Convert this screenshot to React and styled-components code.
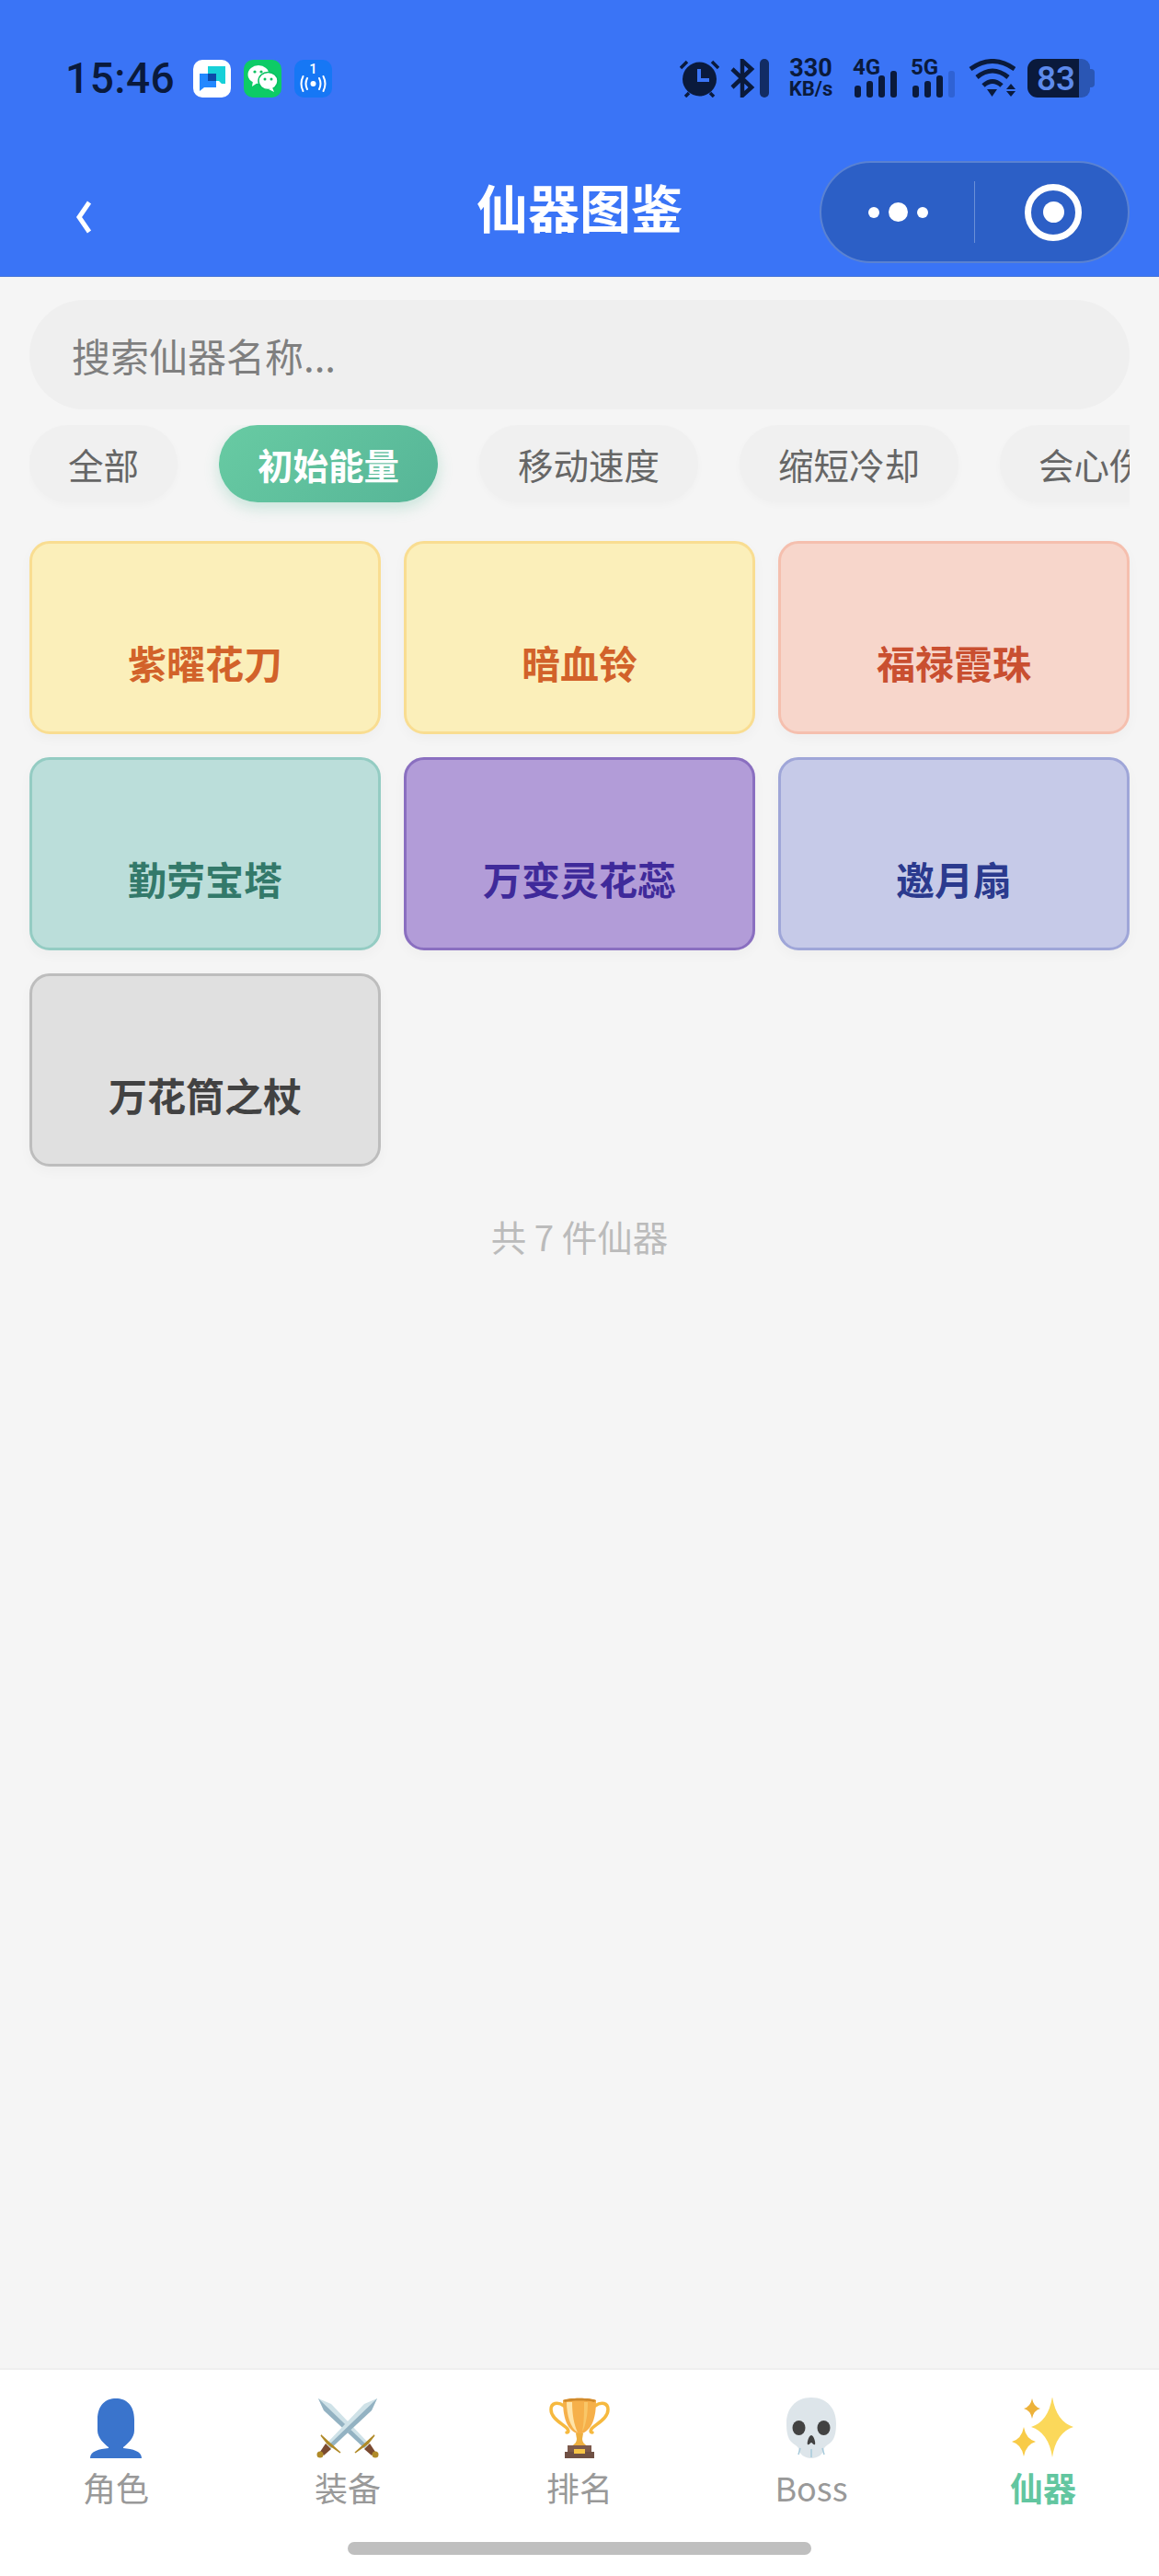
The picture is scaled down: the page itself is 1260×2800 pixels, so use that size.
import React from "react"
import styled, { createGlobalStyle } from "styled-components"

const CJK = `"Noto Sans CJK SC", "Noto Sans", sans-serif`
const DARK = "#0a1a3c"

const GlobalStyle = createGlobalStyle`
    html, body {
        margin: 0;
        padding: 0;
        background: #f5f5f5;
    }
    * {
        box-sizing: border-box;
    }
`

const Page = styled.div`
    display: flex;
    flex-direction: column;
    width: 1260px;
    height: 2800px;
    overflow: hidden;
    background: #f5f5f5;
    font-family: ${CJK};
`

const Header = styled.header`
    height: 301px;
    padding-top: 64px;
    background: #3a74f6;
    border-bottom: 1px solid #4a78d8;
`

const StatusBar = styled.div`
    display: flex;
    align-items: center;
    justify-content: space-between;
    height: 42px;
    padding: 0 70px 0 71px;
`

const StatusLeft = styled.div`
    display: flex;
    align-items: center;
`

const Clock = styled.span`
    width: 139px;
    font-family: Roboto, sans-serif;
    font-size: 46px;
    font-weight: 500;
    letter-spacing: 0.5px;
    color: ${DARK};
`

const AppIcons = styled.div`
    display: flex;
    gap: 14px;
`

const AppIcon = styled.div`
    display: flex;
    align-items: center;
    justify-content: center;
    width: 41px;
    height: 41px;
    border-radius: 10px;
    background: ${({ $bg }) => $bg};
`

const StatusRight = styled.div`
    display: flex;
    align-items: center;
    gap: 14px;
`

const Alarm = styled.div`
    display: flex;
    margin-right: -2px;
`

const BluetoothGroup = styled.div`
    display: flex;
    align-items: center;
    gap: 5px;
`

const MutedBar = styled.div`
    width: 10px;
    height: 42px;
    border-radius: 5px;
    background: #122c64;
`

const Speed = styled.div`
    display: flex;
    flex-direction: column;
    align-items: center;
    width: 49px;
    margin: 0 7px;
    font-family: Roboto, sans-serif;
    font-weight: 700;
    color: ${DARK};
`

const SpeedValue = styled.span`
    font-size: 27px;
    line-height: 22px;
`

const SpeedUnit = styled.span`
    margin-top: 2px;
    font-size: 22px;
    line-height: 20px;
    white-space: nowrap;
`

const Signal = styled.div`
    position: relative;
    width: 49px;
    height: 42px;
`

const SignalLabel = styled.span`
    position: absolute;
    top: -3px;
    left: 0;
    font-family: Roboto, sans-serif;
    font-size: 24px;
    line-height: 24px;
    font-weight: 700;
    color: ${DARK};
`

const Wifi = styled.div`
    display: flex;
    margin-right: -1px;
`

const Battery = styled.div`
    display: flex;
    align-items: center;
    height: 42px;
`

const BatteryFill = styled.div`
    display: flex;
    align-items: center;
    justify-content: flex-end;
    width: 56px;
    height: 42px;
    padding-right: 4px;
    border-radius: 11px 0 0 11px;
    background: ${DARK};
    font-family: Roboto, sans-serif;
    font-size: 37px;
    font-weight: 500;
    color: #5d8aec;
`

const BatteryRest = styled.div`
    width: 12px;
    height: 42px;
    border-radius: 0 9px 9px 0;
    background: #2a56b4;
`

const BatteryNub = styled.div`
    width: 5px;
    height: 20px;
    border-radius: 0 4px 4px 0;
    background: #2a56b4;
`

const NavBar = styled.nav`
    display: grid;
    grid-template-columns: 1fr auto 1fr;
    align-items: center;
    height: 111px;
    margin-top: 69px;
    padding: 0 32px;
`

const BackButton = styled.div`
    display: flex;
    margin: 10px 0 0 50px;
`

const Title = styled.h1`
    margin: 0 0 14px;
    font-size: 56px;
    font-weight: 700;
    line-height: 1;
    color: #fff;
`

const Capsule = styled.div`
    display: flex;
    align-items: center;
    justify-self: end;
    width: 337px;
    height: 111px;
    border: 2px solid rgba(255, 255, 255, 0.22);
    border-radius: 56px;
    background: #2c5fc6;
`

const CapsulePart = styled.div`
    display: flex;
    flex: 1;
    align-items: center;
    justify-content: center;
    gap: 10px;
`

const Dot = styled.span`
    width: ${({ $size }) => $size}px;
    height: ${({ $size }) => $size}px;
    border-radius: 50%;
    background: #fff;
`

const CapsuleDivider = styled.div`
    width: 1px;
    height: 67px;
    background: rgba(255, 255, 255, 0.3);
`

const Ring = styled.div`
    display: flex;
    align-items: center;
    justify-content: center;
    width: 62px;
    height: 62px;
    margin-left: 4px;
    border: 7px solid #fff;
    border-radius: 50%;
`

const Main = styled.main`
    flex: 1;
    padding: 25px 32px 0;
`

const Search = styled.input`
    display: block;
    width: 100%;
    height: 119px;
    padding: 0 46px;
    border: none;
    border-radius: 60px;
    outline: none;
    background: #efefef;
    font-family: ${CJK};
    font-size: 42px;
    color: #333;

    &::placeholder {
        color: #7f7f7f;
        opacity: 1;
    }
`

const FilterRow = styled.div`
    display: flex;
    gap: 45px;
    height: 111px;
    margin-top: 17px;
    overflow: hidden;
`

const Chip = styled.div`
    flex: none;
    height: 84px;
    padding: 0 42px;
    border-radius: 42px;
    font-size: 38.5px;
    line-height: 84px;
    font-weight: ${({ $active }) => ($active ? 700 : 400)};
    color: ${({ $active }) => ($active ? "#fff" : "#666")};
    background: ${({ $active }) =>
        $active ? "linear-gradient(135deg, #68cba3, #56b597)" : "#f0f0f0"};
    box-shadow: ${({ $active }) =>
        $active
            ? "0 6px 16px rgba(94, 190, 155, 0.3)"
            : "0 3px 8px rgba(0, 0, 0, 0.025)"};
`

const Grid = styled.div`
    display: grid;
    grid-template-columns: repeat(3, 382px);
    grid-auto-rows: 210px;
    gap: 25px 25px;
    margin-top: 15px;
`

const Card = styled.div`
    display: flex;
    align-items: flex-end;
    justify-content: center;
    padding-bottom: 45px;
    border: 3px solid ${({ $border }) => $border};
    border-radius: 22px;
    background: ${({ $bg }) => $bg};
    box-shadow: 0 5px 14px rgba(0, 0, 0, 0.03);
    font-size: 42px;
    line-height: 60px;
    font-weight: 700;
    color: ${({ $color }) => $color};
`

const Count = styled.div`
    margin-top: 47px;
    font-size: 38.5px;
    line-height: 56px;
    text-align: center;
    color: #bbb;
`

const TabBar = styled.footer`
    display: flex;
    flex-direction: column;
    height: 226px;
    padding-top: 30px;
    background: #fff;
    border-top: 2px solid #efefef;
`

const Tabs = styled.div`
    display: grid;
    grid-template-columns: repeat(5, 1fr);
`

const Tab = styled.div`
    display: flex;
    flex-direction: column;
    align-items: center;
`

const TabLabel = styled.span`
    margin-top: 9px;
    font-size: 36px;
    line-height: 44px;
    font-weight: ${({ $active }) => ($active ? 700 : 400)};
    color: ${({ $active }) => ($active ? "#62c6a0" : "#999")};
`

const HomeBar = styled.div`
    align-self: center;
    width: 504px;
    height: 14px;
    margin-top: 38px;
    border-radius: 7px;
    background: #bfbfbf;
`

const AlarmIcon = () => (
    <svg width="43" height="42" viewBox="0 0 43 42">
        <circle cx="21.5" cy="22" r="18.5" fill={DARK} />
        <path d="M21 11v12h11" fill="none" stroke="#3a74f6" strokeWidth="4" />
        <path d="M1 10 8 3M42 10 35 3M6 41l4-4M37 41l-4-4" stroke={DARK} strokeWidth="3.5" />
    </svg>
)

const BluetoothIcon = () => (
    <svg width="27" height="42" viewBox="0 0 27 42">
        <path d="M2 11 23 31 13 40V2L23 11 2 31" fill="none" stroke={DARK} strokeWidth="4.5" />
    </svg>
)

const Bars = ({ faint }) => (
    <svg width="49" height="42" viewBox="0 0 49 42">
        <rect x="2" y="29" width="7" height="13" rx="3" fill={DARK} />
        <rect x="15" y="24" width="7" height="18" rx="3" fill={DARK} />
        <rect x="28" y="18" width="7" height="24" rx="3" fill={DARK} />
        <rect x="41" y="13" width="7" height="29" rx="3" fill={faint ? "#2f62d4" : DARK} />
    </svg>
)

const WifiIcon = () => (
    <svg width="51" height="42" viewBox="0 0 51 42">
        <g fill="none" stroke={DARK} strokeWidth="5">
            <path d="M2 11Q26-6 50 11" />
            <path d="M9 20Q26 6 43 20" />
            <path d="M16 29Q26 20 36 29" />
        </g>
        <path d="M20 33H31L25.5 41Z" fill={DARK} />
        <path d="M41 33H51L46 27Z" fill={DARK} />
        <path d="M41 35H51L46 41Z" fill={DARK} />
    </svg>
)

const ChatIcon = () => (
    <svg width="30" height="30" viewBox="0 0 30 30">
        <path d="M10 2H29V21H25L22 18H10Z" fill="#17d0d8" />
        <path d="M1 10H19V25H6L1 29Z" fill="#2388ff" />
        <rect x="10" y="10" width="9" height="8" fill="#0d4aa8" />
    </svg>
)

const WechatIcon = () => (
    <svg width="34" height="30" viewBox="0 0 34 30">
        <ellipse cx="12" cy="11" rx="11.5" ry="10" fill="#fff" />
        <path d="M6 18 5 24 11 20Z" fill="#fff" />
        <ellipse cx="22.5" cy="18" rx="10.5" ry="9.5" fill="#fff" stroke="#07c160" strokeWidth="1.5" />
        <path d="M27 25 29 30 23 27Z" fill="#fff" />
        <circle cx="8" cy="8" r="1.6" fill="#07c160" />
        <circle cx="15" cy="8" r="1.6" fill="#07c160" />
        <circle cx="19" cy="16" r="1.5" fill="#07c160" />
        <circle cx="26" cy="16" r="1.5" fill="#07c160" />
    </svg>
)

const HotspotIcon = () => (
    <svg width="41" height="41" viewBox="0 0 41 41">
        <text x="20.5" y="15" textAnchor="middle" fontFamily="Roboto" fontSize="15" fontWeight="500" fill="#fff">1</text>
        <circle cx="20.5" cy="26" r="3" fill="#fff" />
        <g fill="none" stroke="#fff" strokeWidth="2" strokeLinecap="round">
            <path d="M14 20Q11 26 14 32M27 20Q30 26 27 32" />
            <path d="M9.5 18Q5.5 26 9.5 34M31.5 18Q35.5 26 31.5 34" />
        </g>
    </svg>
)

const PersonIcon = () => (
    <svg width="66" height="66" viewBox="0 0 66 66">
        <path
            d="M33 1C22 1 13 8 13 24v12c0 8 8 15 12 18v1C15 56 5 58 5 66H61C61 58 51 56 41 55v-1c4-3 12-10 12-18V24C53 8 44 1 33 1Z"
            fill="#3a74cc"
        />
    </svg>
)

const Sword = () => (
    <g>
        <path d="M66 1 60 14 16 55 11 50 52 7Z" fill="#cfe2e8" />
        <path d="M66 1 60 14 16 55 13 52Z" fill="#93b2c2" />
        <path d="M5 41 26 60 12 50Z" fill="#b08a28" stroke="#b08a28" strokeWidth="1.5" />
        <path d="M10 50 16 56 8 63 4 59Z" fill="#7a4a30" />
        <circle cx="4" cy="62" r="3.5" fill="#b08a28" />
    </g>
)

const SwordsIcon = () => (
    <svg width="68" height="66" viewBox="0 0 68 66">
        <g transform="translate(68 0) scale(-1 1)">
            <Sword />
        </g>
        <Sword />
    </svg>
)

const TrophyIcon = () => (
    <svg width="66" height="66" viewBox="0 0 66 66">
        <g fill="none" stroke="#f6b93f" strokeWidth="3.5" strokeLinecap="round">
            <path d="M16 9C9 4 2 6 2 13c0 9 10 14 17 20 2 2 3 5 0 5" />
            <path d="M50 9c7-5 14-3 14 4 0 9-10 14-17 20-2 2-3 5 0 5" />
        </g>
        <path d="M15 3C21 0 45 0 51 3 51 19 48 34 36 39H30C18 34 15 19 15 3Z" fill="#f6b04a" />
        <path d="M19 5H25C25 18 27 30 31 38 23 33 19 19 19 5Z" fill="#ffe4a8" />
        <path d="M38 5H42C42 18 40 30 36 37 38 28 38 16 38 5Z" fill="#f9c768" />
        <path d="M15 3C21 0 45 0 51 3L49 5C43 3 23 3 17 5Z" fill="#d08a2c" />
        <path d="M29 39H37L36 45C36 48 38 51 42 53H24C28 51 30 48 30 45Z" fill="#eeb040" />
        <rect x="20" y="52" width="26" height="7" fill="#7d5a4c" />
        <rect x="17" y="59" width="32" height="7" fill="#6f5044" />
        <rect x="27" y="56" width="12" height="5" fill="#f6c445" />
    </svg>
)

const SkullIcon = () => (
    <svg width="66" height="66" viewBox="0 0 66 66">
        <path
            d="M33 0C15 0 6 13 6 28c0 8 1 16 5 20 3 3 6 4 8 7 1 7 7 11 14 11s13-4 14-11c2-3 5-4 8-7 4-4 5-12 5-20C60 13 51 0 33 0Z"
            fill="#dde5ea"
        />
        <ellipse cx="19.5" cy="33" rx="7" ry="8" fill="#424242" />
        <ellipse cx="46.5" cy="33" rx="7" ry="8" fill="#424242" />
        <path d="M33 41C30 41 28 50 29 51 31 52 32 49 33 49s2 3 4 2C38 50 36 41 33 41Z" fill="#424242" />
        <path d="M21 55 19 62M33 56V65M45 55 47 62" stroke="#a7cadb" strokeWidth="1.5" fill="none" />
    </svg>
)

const Sparkle = ({ cx, cy, rx, ry, fill }) => (
    <path
        d={`M${cx} ${cy - ry}Q${cx + rx * 0.18} ${cy - ry * 0.18} ${cx + rx} ${cy}Q${cx + rx * 0.18} ${cy + ry * 0.18} ${cx} ${cy + ry}Q${cx - rx * 0.18} ${cy + ry * 0.18} ${cx - rx} ${cy}Q${cx - rx * 0.18} ${cy - ry * 0.18} ${cx} ${cy - ry}Z`}
        fill={fill}
    />
)

const SparklesIcon = () => (
    <svg width="68" height="66" viewBox="0 0 68 66">
        <Sparkle cx={44} cy={32} rx={23} ry={33} fill="#fbd85a" />
        <Sparkle cx={22} cy={12} rx={9} ry={11} fill="#edb23a" />
        <Sparkle cx={13} cy={48} rx={13} ry={16} fill="#f8cb48" />
    </svg>
)

const filters = ["全部", "初始能量", "移动速度", "缩短冷却", "会心伤害"]

const items = [
    { name: "紫曜花刀", bg: "#fbefba", border: "#f9dd91", color: "#d2622a" },
    { name: "暗血铃", bg: "#fbefba", border: "#f9dd91", color: "#d2622a" },
    { name: "福禄霞珠", bg: "#f7d6cb", border: "#f5bfae", color: "#c94f30" },
    { name: "勤劳宝塔", bg: "#bbdeda", border: "#94ccc3", color: "#33796a" },
    { name: "万变灵花蕊", bg: "#b29cd8", border: "#8a6fc0", color: "#3f2a9a" },
    { name: "邀月扇", bg: "#c6cae8", border: "#9fa6d8", color: "#2b3a8e" },
    { name: "万花筒之杖", bg: "#e0e0e0", border: "#bdbdbd", color: "#424242" },
]

const tabs = [
    { label: "角色", Icon: PersonIcon },
    { label: "装备", Icon: SwordsIcon },
    { label: "排名", Icon: TrophyIcon },
    { label: "Boss", Icon: SkullIcon },
    { label: "仙器", Icon: SparklesIcon, active: true },
]

const App = () => (
    <Page>
        <GlobalStyle />
        <Header>
            <StatusBar>
                <StatusLeft>
                    <Clock>15:46</Clock>
                    <AppIcons>
                        <AppIcon $bg="#fff">
                            <ChatIcon />
                        </AppIcon>
                        <AppIcon $bg="#0dcb66">
                            <WechatIcon />
                        </AppIcon>
                        <AppIcon $bg="#1677f5">
                            <HotspotIcon />
                        </AppIcon>
                    </AppIcons>
                </StatusLeft>
                <StatusRight>
                    <Alarm>
                        <AlarmIcon />
                    </Alarm>
                    <BluetoothGroup>
                        <BluetoothIcon />
                        <MutedBar />
                    </BluetoothGroup>
                    <Speed>
                        <SpeedValue>330</SpeedValue>
                        <SpeedUnit>KB/s</SpeedUnit>
                    </Speed>
                    <Signal>
                        <SignalLabel>4G</SignalLabel>
                        <Bars />
                    </Signal>
                    <Signal>
                        <SignalLabel>5G</SignalLabel>
                        <Bars faint />
                    </Signal>
                    <Wifi>
                        <WifiIcon />
                    </Wifi>
                    <Battery>
                        <BatteryFill>83</BatteryFill>
                        <BatteryRest />
                        <BatteryNub />
                    </Battery>
                </StatusRight>
            </StatusBar>
            <NavBar>
                <BackButton>
                    <svg width="18" height="40" viewBox="0 0 18 40">
                        <path d="M15 4 4 20 15 36" fill="none" stroke="#fff" strokeWidth="5" />
                    </svg>
                </BackButton>
                <Title>仙器图鉴</Title>
                <Capsule>
                    <CapsulePart>
                        <Dot $size={12} />
                        <Dot $size={21} />
                        <Dot $size={12} />
                    </CapsulePart>
                    <CapsuleDivider />
                    <CapsulePart>
                        <Ring>
                            <Dot $size={23} />
                        </Ring>
                    </CapsulePart>
                </Capsule>
            </NavBar>
        </Header>
        <Main>
            <Search placeholder="搜索仙器名称..." readOnly />
            <FilterRow>
                {filters.map((filter) => (
                    <Chip key={filter} $active={filter === "初始能量"}>
                        {filter}
                    </Chip>
                ))}
            </FilterRow>
            <Grid>
                {items.map((item) => (
                    <Card key={item.name} $bg={item.bg} $border={item.border} $color={item.color}>
                        {item.name}
                    </Card>
                ))}
            </Grid>
            <Count>共 7 件仙器</Count>
        </Main>
        <TabBar>
            <Tabs>
                {tabs.map(({ label, Icon, active }) => (
                    <Tab key={label}>
                        <Icon />
                        <TabLabel $active={active}>{label}</TabLabel>
                    </Tab>
                ))}
            </Tabs>
            <HomeBar />
        </TabBar>
    </Page>
)

export default App
